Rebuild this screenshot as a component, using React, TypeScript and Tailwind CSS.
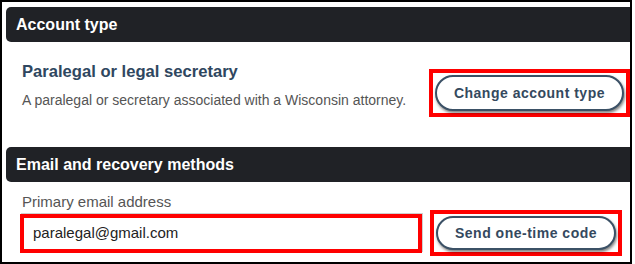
import React from 'react';

const SectionHeader: React.FC<{ title: string }> = ({ title }) => (
  <div className="h-[35px] flex items-center pl-[10px] bg-[#202226] rounded-l-[5px]">
    <h2 className="text-[16px] font-bold text-white leading-none">{title}</h2>
  </div>
);

const PillButton: React.FC<{ label: string; small?: boolean }> = ({ label, small }) => (
  <div className="border-4 border-[#ff0000] p-[2px]">
    <button
      className={
        small
          ? 'h-[34px] px-[17px] rounded-full border-2 border-[#3b5166] bg-white text-[14px] font-bold tracking-[0.5px] text-[#34495e] shadow-[1px_2px_3px_rgba(0,0,0,0.5)]'
          : 'h-[36px] px-[17px] rounded-full border-2 border-[#3b5166] bg-white text-[14px] font-bold tracking-[0.5px] text-[#34495e] shadow-[1px_2px_3px_rgba(0,0,0,0.5)]'
      }
    >
      {label}
    </button>
  </div>
);

export default function App() {
  return (
    <div
      className="w-[632px] h-[264px] border-2 border-black bg-white pl-[4px] pt-[5px] overflow-hidden"
      style={{ fontFamily: '"Liberation Sans", Arial, sans-serif' }}
    >
      <SectionHeader title="Account type" />
      <div className="h-[105px] flex justify-between">
        <div className="pl-[16px] pt-[20px]">
          <h3 className="text-[16.6px] leading-[20px] font-bold text-[#2f4760]">Paralegal or legal secretary</h3>
          <p className="mt-[8px] text-[14px] leading-[20px] text-[#555]">
            A paralegal or secretary associated with a Wisconsin attorney.
          </p>
        </div>
        <div className="pt-[27px]">
          <PillButton label="Change account type" />
        </div>
      </div>

      <SectionHeader title="Email and recovery methods" />
      <div className="pl-[14px]">
        <label className="block mt-[12px] pl-[2px] text-[15px] leading-[16px] text-[#555]">Primary email address</label>
        <div className="flex items-center gap-[8px]">
          <div className="w-[402px] h-[39px] border-4 border-[#ff0000] flex items-center pl-[9px] shadow-[1px_-1px_0_#cfcfcf]">
            <span className="text-[15px] text-[#222]">paralegal@gmail.com</span>
          </div>
          <PillButton label="Send one-time code" small />
        </div>
      </div>
    </div>
  );
}
